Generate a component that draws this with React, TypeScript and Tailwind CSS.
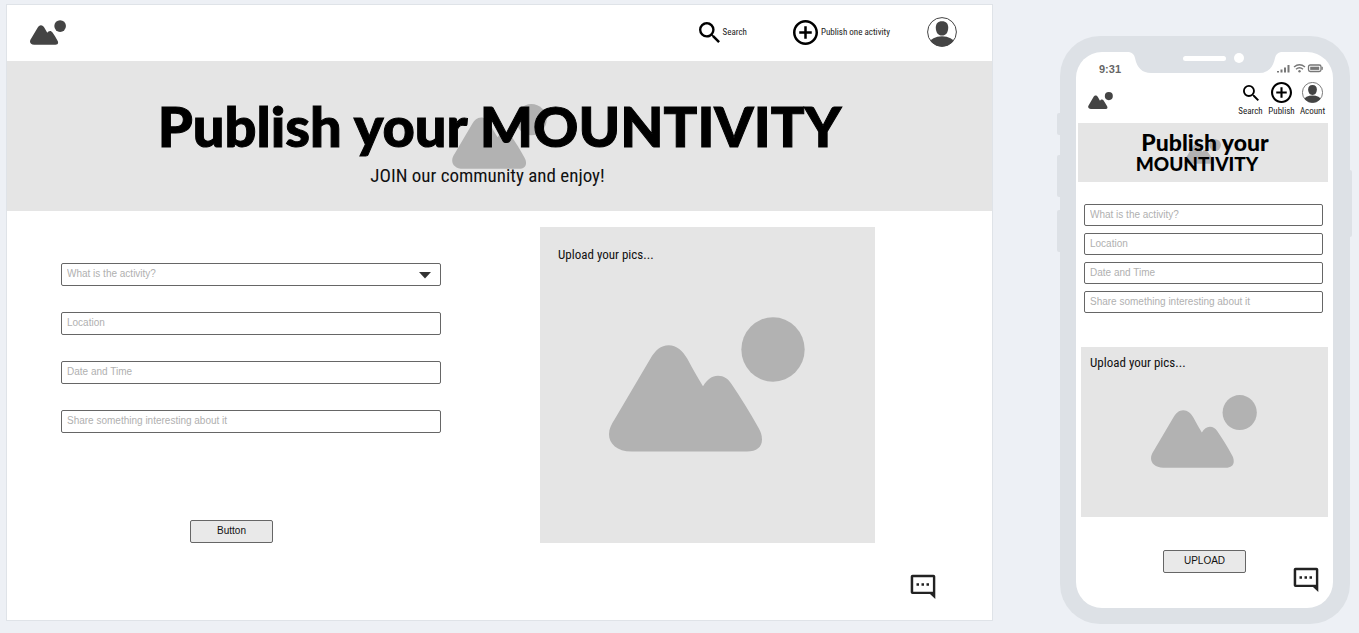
import React from "react";

const condensed = "font-['Roboto_Condensed','Liberation_Sans_Narrow','Liberation_Sans',sans-serif]";
const field =
  "w-full rounded-[2px] border border-[#666] bg-white px-[5px] pb-[2px] text-[10px] leading-[12px] text-black placeholder:text-[#b0b0b0] placeholder:opacity-100";

function Mountains({ className }: { className: string }) {
  return (
    <svg viewBox="238 291 588 404" className={className} fill="currentColor" aria-hidden="true">
      <path d="M306 694C262 694 238 670 238 642C238 626 245 612 255 597L362 416C376 390 394 375 417 375C441 375 459 391 473 416C490 447 503 472 520 498C533 479 546 467 565 467C583 467 595 476 606 492C633 532 661 576 686 622C693 634 697 644 697 658C697 681 681 694 652 694Z" />
      <ellipse cx="730" cy="388" rx="95" ry="97" />
    </svg>
  );
}

function SearchIcon({ className }: { className: string }) {
  return (
    <svg viewBox="3 3 17.5 17.5" className={className} fill="currentColor" aria-hidden="true">
      <path d="M15.5 14h-.79l-.28-.27A6.47 6.47 0 0 0 16 9.5 6.5 6.5 0 1 0 9.5 16c1.61 0 3.09-.59 4.23-1.57l.27.28v.79l5 4.99L20.49 19l-4.99-5zm-6 0C7.01 14 5 11.99 5 9.5S7.01 5 9.5 5 14 7.01 14 9.5 11.99 14 9.5 14z" />
    </svg>
  );
}

function PlusIcon({ className }: { className: string }) {
  return (
    <svg viewBox="2 2 20 20" className={className} fill="currentColor" aria-hidden="true">
      <path d="M13 7h-2v4H7v2h4v4h2v-4h4v-2h-4V7zm-1-5C6.48 2 2 6.48 2 12s4.480 10 10 10 10-4.480 10-10S17.520 2 12 2zm0 18c-4.410 0-8-3.590-8-8s3.590-8 8-8 8 3.590 8 8-3.590 8-8 8z" />
    </svg>
  );
}

function AvatarIcon({ className, id }: { className: string; id: string }) {
  return (
    <svg viewBox="0 0 30 30" className={className} aria-hidden="true">
      <clipPath id={id}>
        <circle cx="15" cy="15" r="14.5" />
      </clipPath>
      <circle cx="15" cy="15" r="14.4" fill="#fff" stroke="#444" strokeWidth="1" />
      <path
        d="M15 4.200C19.200 4.200 21.200 6.600 21.200 10.500C21.200 15.500 19 18.600 15 18.600S8.800 15.500 8.800 10.500C8.800 6.600 10.800 4.200 15 4.200Z"
        fill="#444"
      />
      <ellipse cx="15" cy="26" rx="12" ry="6.8" fill="#444" clipPath={`url(#${id})`} />
    </svg>
  );
}

function ChatIcon() {
  return (
    <svg viewBox="0 0 26 26" className="size-[26px]" fill="#222" aria-hidden="true">
      <path
        fillRule="evenodd"
        d="M2.500 .8H23.500Q25.300 .8 25.300 2.600V25L20 20H2.500Q.7 20 .7 18.200V2.600Q.7 .8 2.500 .8ZM3.200 3.200V17.700H22.900V3.200Z"
      />
      <path d="M6.500 9.200h2.500v2.500H6.500zM11.500 9.200H14v2.500h-2.500zM16.500 9.200H19v2.500h-2.500z" />
    </svg>
  );
}

function DesktopView() {
  return (
    <main className="flex min-w-0 flex-1 flex-col border border-[#dfe3e8] bg-white">
      <header className="flex h-[56px] items-center pb-[2px] pl-[23px] pr-[35px]">
        <a href="#home" aria-label="Home" className="mr-auto text-[#444]">
          <Mountains className="h-[25px] w-[36px]" />
        </a>
        <nav className={`flex items-center text-[9px] leading-3 text-[#222] ${condensed}`}>
          <a href="#search" className="mr-[46px] flex items-center gap-[3px]">
            <SearchIcon className="size-[21px] text-black" />
            Search
          </a>
          <a href="#publish" className="mr-[37px] flex items-center gap-[3px]">
            <PlusIcon className="size-[25px] text-black" />
            Publish one activity
          </a>
          <a href="#account" aria-label="Account">
            <AvatarIcon id="desktop-avatar" className="size-[30px]" />
          </a>
        </nav>
      </header>

      <section className="relative flex h-[150px] flex-col items-center bg-[#e5e5e5] pt-8">
        <div className="absolute inset-x-0 top-[43px] flex justify-center text-[#b2b2b2]">
          <Mountains className="h-[65px] w-[95px]" />
        </div>
        <h1 className="relative whitespace-nowrap font-['Lato',sans-serif] text-[56px] font-black leading-[66px] text-black [-webkit-text-stroke:1px_black]">
          Publish your MOUNTIVITY
        </h1>
        <p className={`relative pr-6 text-[19px] leading-[34px] text-[#111] ${condensed}`}>
          JOIN our community and enjoy!
        </p>
      </section>

      <div className="flex items-start justify-between pl-[54px] pr-[117px] pt-4">
        <form className="flex w-[380px] flex-col pt-9">
          <div className="flex flex-col gap-[26px]">
            <div className="relative">
              <select
                aria-label="What is the activity?"
                defaultValue=""
                className="block h-[23px] w-full appearance-none rounded-[2px] border border-[#666] bg-white px-[5px] pb-[2px] text-[10px] leading-[12px] text-[#b0b0b0]"
              >
                <option value="">What is the activity?</option>
              </select>
              <svg
                viewBox="0 0 12 7"
                className="pointer-events-none absolute right-[10px] top-[9px] h-[7px] w-3"
                fill="#333"
                aria-hidden="true"
              >
                <path d="M0 0H12L6 6.500Z" />
              </svg>
            </div>
            <input aria-label="Location" placeholder="Location" className={`h-[23px] ${field}`} />
            <input aria-label="Date and Time" placeholder="Date and Time" className={`h-[23px] ${field}`} />
            <input
              aria-label="Share something interesting about it"
              placeholder="Share something interesting about it"
              className={`h-[23px] ${field}`}
            />
          </div>
          <button
            type="button"
            className="ml-[129px] mt-[87px] h-[23px] w-[83px] rounded-[2px] border border-[#666] bg-[#e9e9e9] pb-[2px] text-[10px] leading-3 text-[#111]"
          >
            Button
          </button>
        </form>

        <label className="flex h-[316px] w-[335px] cursor-pointer flex-col bg-[#e5e5e5] pl-[18px] pt-[18px]">
          <span className={`text-[13px] leading-5 text-[#111] ${condensed}`}>Upload your pics...</span>
          <input type="file" multiple className="sr-only" />
          <Mountains className="ml-[51px] mt-[52px] h-[135px] w-[196px] text-[#b2b2b2]" />
        </label>
      </div>

      <div className="flex justify-end pr-14 pt-[31px]">
        <button type="button" aria-label="Open chat">
          <ChatIcon />
        </button>
      </div>
    </main>
  );
}

function StatusIcons() {
  return (
    <svg viewBox="0 0 46 10" className="h-[10px] w-[46px]" fill="#777" aria-hidden="true">
      <path d="M0 8h2v1.500H0zM3.500 6.500h2v3h-2zM7 4.500h2v5H7zM10.500 2h2v7.500h-2z" />
      <path
        d="M17 4Q22.500 -.5 28 4M19 6.200Q22.500 3.200 26 6.200"
        fill="none"
        stroke="#777"
        strokeWidth="1.4"
      />
      <circle cx="22.5" cy="8.3" r="1.2" />
      <rect x="31.5" y="2" width="12.5" height="6.500" rx="1.800" fill="none" stroke="#777" strokeWidth="1.3" />
      <rect x="33.2" y="3.700" width="9" height="3.200" />
      <rect x="44.6" y="3.800" width="1.2" height="3" />
    </svg>
  );
}

function PhoneView() {
  return (
    <aside className="relative mt-8 w-[290px] shrink-0 rounded-[40px] bg-[#dde1e6] py-4 pl-4 pr-[17px]">
      <div className="absolute -left-[3px] top-[77px] h-[22px] w-[3px] rounded-l-[2px] bg-[#dde1e6]" />
      <div className="absolute -left-[3px] top-[119px] h-[42px] w-[3px] rounded-l-[2px] bg-[#dde1e6]" />
      <div className="absolute -left-[3px] top-[174px] h-[42px] w-[3px] rounded-l-[2px] bg-[#dde1e6]" />
      <div className="absolute -right-[2px] top-[134px] h-[67px] w-[2px] rounded-r-[2px] bg-[#dde1e6]" />
      <div className="absolute inset-x-0 top-4 flex justify-center">
        <svg viewBox="0 0 152 22" className="h-[22px] w-[152px]" aria-hidden="true">
          <path d="M0 0H152Q147 1 146 6Q143 21 130 21H22Q9 21 6 6Q5 1 0 0Z" fill="#dde1e6" />
          <rect x="54" y="4" width="43" height="5" rx="2.5" fill="#fff" />
          <circle cx="110" cy="6" r="5" fill="#fff" />
        </svg>
      </div>

      <div className="flex h-[556px] flex-col rounded-[26px] bg-white pl-[2px] pr-[5px]">
        <div className="flex h-7 items-end justify-between pl-[21px] pr-[5px]">
          <span className="pb-[4px] font-['Liberation_Sans',sans-serif] text-[11px] font-bold leading-[14px] text-[#666]">
            9:31
          </span>
          <div className="pb-[7px]">
            <StatusIcons />
          </div>
        </div>

        <header className="flex h-[43px] items-start justify-between pl-[10px]">
          <a href="#home" aria-label="Home" className="mt-[12px] text-[#444]">
            <Mountains className="h-[17px] w-[25px]" />
          </a>
          <nav className={`grid grid-cols-3 pt-[2px] text-[9px] leading-3 text-[#222] ${condensed}`}>
            <a href="#search" className="flex w-[31px] flex-col items-center gap-[2px]">
              <span className="flex h-[21px] items-center">
                <SearchIcon className="size-[16px] text-black" />
              </span>
              Search
            </a>
            <a href="#publish" className="flex w-[31px] flex-col items-center gap-[2px]">
              <PlusIcon className="size-[21px] text-black" />
              Publish
            </a>
            <a href="#account" className="flex w-[31px] flex-col items-center gap-[2px]">
              <AvatarIcon id="phone-avatar" className="size-[21px]" />
              Acount
            </a>
          </nav>
        </header>

        <section className="relative flex h-[59px] flex-col items-center bg-[#e5e5e5] pt-[9px]">
          <div className="absolute inset-x-0 top-4 flex justify-center text-[#b2b2b2]">
            <Mountains className="h-[25px] w-[36px]" />
          </div>
          <h2 className="relative flex flex-col items-center whitespace-nowrap font-['Lato',sans-serif] text-[23px] font-black leading-[21px] text-black">
            <span className="pl-1">Publish your</span>
            <span className="pr-3 text-[19px]">MOUNTIVITY</span>
          </h2>
        </section>

        <form className="flex flex-1 flex-col pl-[3px] pt-[22px]">
          <div className="flex flex-col gap-[7px] pl-[3px] pr-[5px]">
            <input aria-label="What is the activity?" placeholder="What is the activity?" className={`h-[22px] ${field}`} />
            <input aria-label="Location" placeholder="Location" className={`h-[22px] ${field}`} />
            <input aria-label="Date and Time" placeholder="Date and Time" className={`h-[22px] ${field}`} />
            <input
              aria-label="Share something interesting about it"
              placeholder="Share something interesting about it"
              className={`h-[22px] ${field}`}
            />
          </div>

          <label className="mt-[34px] flex h-[170px] cursor-pointer flex-col bg-[#e5e5e5] pl-[9px] pt-[6px]">
            <span className={`text-[13px] leading-5 text-[#111] ${condensed}`}>Upload your pics...</span>
            <input type="file" multiple className="sr-only" />
            <Mountains className="ml-[61px] mt-[22px] h-[73px] w-[106px] text-[#b2b2b2]" />
          </label>

          <button
            type="button"
            className="mt-[33px] h-[23px] w-[83px] self-center rounded-[2px] border border-[#666] bg-[#e9e9e9] pb-[2px] text-[10px] leading-3 text-[#111]"
          >
            UPLOAD
          </button>
          <button type="button" aria-label="Open chat" className="-mt-[6px] mr-[9px] self-end">
            <ChatIcon />
          </button>
        </form>
      </div>
    </aside>
  );
}

export default function App() {
  return (
    <div className="flex min-h-screen items-start gap-[67px] bg-[#edf0f5] pb-2 pl-[6px] pr-[9px] pt-1 font-['Liberation_Sans',sans-serif]">
      <div className="flex min-h-[617px] min-w-0 flex-1">
        <DesktopView />
      </div>
      <PhoneView />
    </div>
  );
}
